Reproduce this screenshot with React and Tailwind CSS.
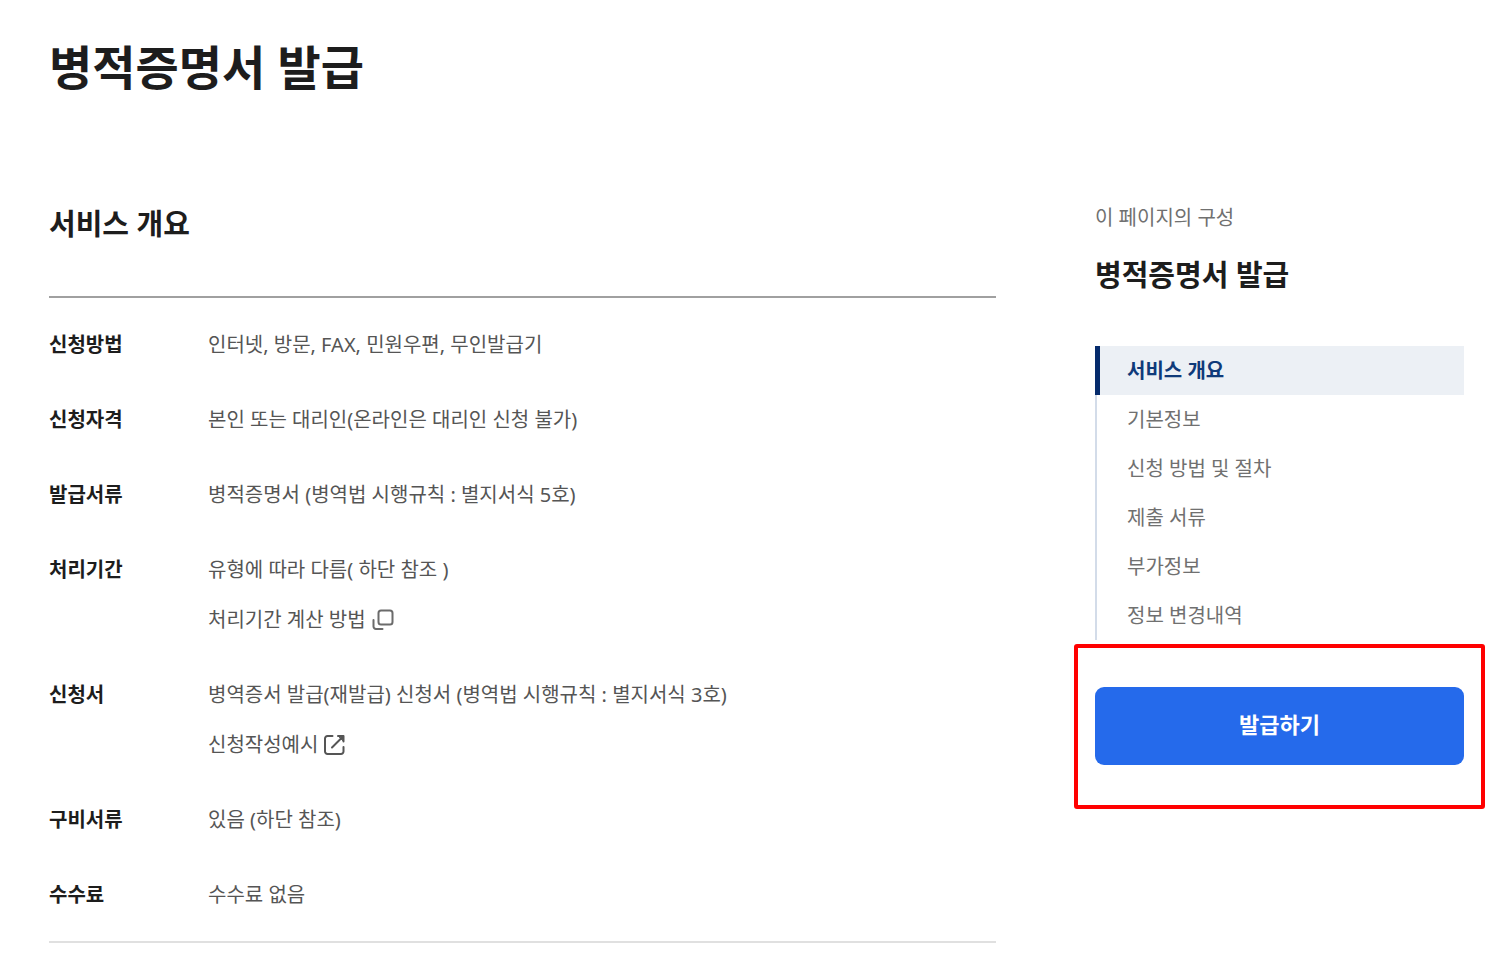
const ROWS = [
  { label: '신청방법', value: '인터넷, 방문, FAX, 민원우편, 무인발급기' },
  { label: '신청자격', value: '본인 또는 대리인(온라인은 대리인 신청 불가)' },
  { label: '발급서류', value: '병적증명서 (병역법 시행규칙 : 별지서식 5호)' },
  {
    label: '처리기간',
    value: '유형에 따라 다름( 하단 참조 )',
    link: { text: '처리기간 계산 방법', Icon: PopupIcon },
  },
  {
    label: '신청서',
    value: '병역증서 발급(재발급) 신청서 (병역법 시행규칙 : 별지서식 3호)',
    link: { text: '신청작성예시', Icon: ExternalIcon },
  },
  { label: '구비서류', value: '있음 (하단 참조)' },
  { label: '수수료', value: '수수료 없음' },
]

const SECTIONS = ['서비스 개요', '기본정보', '신청 방법 및 절차', '제출 서류', '부가정보', '정보 변경내역']

function PopupIcon() {
  return (
    <svg
      className="size-6 text-[#6b6b6b]"
      viewBox="0 0 24 24"
      fill="none"
      stroke="currentColor"
      strokeWidth="2"
      strokeLinecap="round"
      aria-hidden="true"
    >
      <rect x="7.5" y="2.5" width="14" height="14" rx="2.5" />
      <path d="M2.5 12v6.5a2.5 2.5 0 0 0 2.5 2.5h6.5" />
    </svg>
  )
}

function ExternalIcon() {
  return (
    <svg
      className="size-6"
      viewBox="0 0 24 24"
      fill="none"
      stroke="currentColor"
      strokeWidth="2"
      strokeLinecap="round"
      strokeLinejoin="round"
      aria-hidden="true"
    >
      <path d="M9.5 3H4.5A2.5 2.5 0 0 0 2 5.5v13A2.500 2.500 0 0 0 4.500 21h13.500a2.500 2.500 0 0 0 2.500-2.500V14" />
      <path d="M15 3h5.500v5.500M20 3.500 9 14.500" />
      <path d="M15.500 3h5v5z" fill="currentColor" strokeWidth="1" />
    </svg>
  )
}

function Row({ label, value, link }) {
  return (
    <div className="flex">
      <dt className="w-[159px] shrink-0 font-bold text-[#1d1d1d]">{label}</dt>
      <dd>
        <p>{value}</p>
        {link && (
          <a href="#" className="mt-[18px] flex w-fit items-center gap-[5px]">
            {link.text}
            <link.Icon />
          </a>
        )}
      </dd>
    </div>
  )
}

export default function App() {
  return (
    <div className="bg-white pt-[37px] pr-[2px] pl-[49px] font-['Noto_Sans','Noto_Sans_CJK_KR',sans-serif] text-[20px] leading-8 text-[#555]">
      <h1 className="text-[47px] leading-[60px] font-bold text-[#1d1d1d]">병적증명서 발급</h1>

      <div className="mt-[103px] flex items-start gap-[78px]">
        <main className="min-w-0 flex-1">
          <h2 className="text-[29px] leading-[48px] font-bold text-[#1d1d1d]">서비스 개요</h2>
          <dl className="mt-12 flex flex-col gap-[43px] border-t-2 border-b-2 border-t-[#a0a0a0] border-b-[#e0e0e0] pt-[31px] pb-[30px]">
            {ROWS.map((row) => (
              <Row key={row.label} {...row} />
            ))}
          </dl>
        </main>

        <aside className="w-[411px] shrink-0 pt-[2px]">
          <div className="px-[21px]">
            <p className="text-[#707070]">이 페이지의 구성</p>
            <h2 className="mt-[21px] text-[29px] leading-10 font-bold text-[#1d1d1d]">병적증명서 발급</h2>
            <nav className="mt-[51px]">
              <ul>
                {SECTIONS.map((name, i) => (
                  <li key={name}>
                    <a
                      href="#"
                      aria-current={i === 0 ? 'true' : undefined}
                      className={
                        i === 0
                          ? 'flex h-[49px] items-center border-l-[5px] border-[#052b6c] bg-[#ecf0f5] pl-[27px] font-bold text-[#0f3a7a]'
                          : 'flex h-[49px] items-center border-l-2 border-[#d3dce9] pl-[30px] text-[#707070]'
                      }
                    >
                      {name}
                    </a>
                  </li>
                ))}
              </ul>
            </nav>
          </div>

          {/* destaque em volta do botão */}
          <div className="mt-1 rounded-[3px] border-4 border-[#ff0000] px-[17px] pt-[39px] pb-10">
            <button
              type="button"
              className="h-[78px] w-full rounded-[9px] bg-[#256aeb] pb-1 text-[22px] font-bold text-white"
            >
              발급하기
            </button>
          </div>
        </aside>
      </div>
    </div>
  )
}
